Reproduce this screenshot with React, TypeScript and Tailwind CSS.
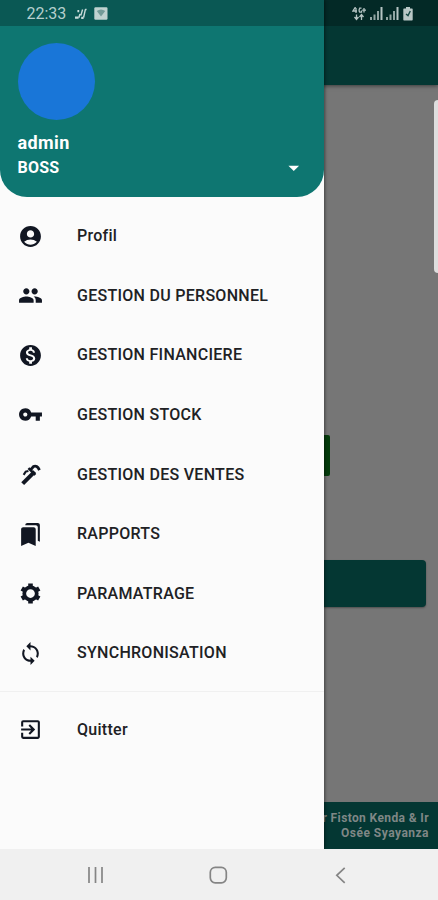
import type { IconType } from 'react-icons';
import {
  MdAccountCircle,
  MdArrowDropDown,
  MdBookmarks,
  MdExitToApp,
  MdGroup,
  MdLoop,
  MdMonetizationOn,
  MdVpnKey,
} from 'react-icons/md';

type IconProps = { size?: number; color?: string };

function Wrench({ size, color }: IconProps) {
  return (
    <svg width={size} height={size} viewBox="0 0 24 24" fill="none" stroke={color}>
      <path d="M4.5 20.8L16 9.3" strokeWidth="3.9" />
      <path d="M10 5.8l6.6 6.6" strokeWidth="2.4" />
      <path d="M5.4 12.4l2-3.2 2.6-.6" strokeWidth="2" />
      <path d="M12.2 7.4l2.6-3q3.4-1.8 5.8 3.4" strokeWidth="2.7" />
    </svg>
  );
}

function Gear({ size, color }: IconProps) {
  return (
    <svg width={size} height={size} viewBox="0 0 24 24" fill="none" stroke={color}>
      <circle cx="12" cy="12" r="6" strokeWidth="3.6" />
      <path
        d="M12 2.3v3.5M12 18.2v3.5M3.6 7.15l3.03 1.75M17.37 15.1l3.03 1.75M3.6 16.85l3.03-1.75M17.37 8.9l3.03-1.75"
        strokeWidth="4.4"
      />
    </svg>
  );
}

const menuItems: { label: string; icon: IconType | typeof Wrench }[] = [
  { label: 'Profil', icon: MdAccountCircle },
  { label: 'GESTION DU PERSONNEL', icon: MdGroup },
  { label: 'GESTION FINANCIERE', icon: MdMonetizationOn },
  { label: 'GESTION STOCK', icon: MdVpnKey },
  { label: 'GESTION DES VENTES', icon: Wrench },
  { label: 'RAPPORTS', icon: MdBookmarks },
  { label: 'PARAMATRAGE', icon: Gear },
  { label: 'SYNCHRONISATION', icon: MdLoop },
];

function MenuItem({ label, icon: Icon }: { label: string; icon: IconType | typeof Wrench }) {
  return (
    <li className="flex h-[59.6px] items-center pl-[17.5px]">
      <Icon size={25} color="#111622" />
      <span className="ml-[34.5px] text-[16px] font-medium tracking-[0.28px] whitespace-nowrap text-[#202124]">{label}</span>
    </li>
  );
}

function Signal() {
  return (
    <svg width="13" height="13" viewBox="0 0 13 13" fill="#b5c4c3">
      <rect x="0" y="10" width="2" height="3" opacity=".8" />
      <rect x="3.5" y="7.5" width="2" height="5.5" opacity=".8" />
      <rect x="7" y="4" width="2" height="9" opacity=".8" />
      <rect x="10.5" y="0" width="2" height="13" />
    </svg>
  );
}

function StatusBar() {
  return (
    <header className="absolute inset-x-0 top-0 z-20 flex h-[26px] items-center bg-black/25 pt-px">
      <span className="ml-[26.5px] w-[40px] text-[16px] whitespace-nowrap text-[#b5cfcd]">22:33</span>
      <svg className="ml-[7.5px]" width="13" height="12" viewBox="0 0 13 12" fill="none" stroke="#c7dbda" strokeWidth="1.4">
        <path d="M4.8 9.8L6 6M9.6 9.5L11.4 1.4M6.8 7.5l1.8-6M11.2 1.5h1.4" />
        <path d="M3.4 3.2h1.8M1 9.6h3.6M7.2 9.8h2.4" strokeWidth="2.3" />
      </svg>
      <svg className="ml-[7px]" width="14" height="13" viewBox="0 0 14 13">
        <rect x=".3" y=".3" width="13.2" height="12.5" rx="1.2" fill="#bfd2d0" />
        <path d="M2.8 4q4.2-3 8.4 0L7 9.5z" fill="#739b98" />
      </svg>
      <div className="mr-[25.5px] ml-auto flex items-center gap-[3.5px]">
        <svg width="14" height="14" viewBox="0 0 14 14" fill="none" stroke="#b5c4c3" strokeWidth="1.3">
          <path d="M3.5 0L1 4h4M4 1v5M9.5 1.2H7.7Q6.5 3.5 7.7 5.2h1.8V3.5M12 1v4.5M10.2 3.2H14" />
          <path d="M4.5 7.5v5M2.5 10l2 2.5 2-2.5M9.5 13V8M7.5 10l2-2.5 2 2.5" />
        </svg>
        <Signal />
        <Signal />
        <svg width="10" height="14" viewBox="0 0 10 14">
          <path d="M3 0h4v1.5h2q.7 0 .7.7v10.6q0 .7-.7.7H1q-.7 0-.7-.7V2.2q0-.7.7-.7h2z" fill="#b9c8c6" />
          <path d="M7.3 4L5 8.6 3 7" fill="none" stroke="#174945" strokeWidth="1.4" />
        </svg>
      </div>
    </header>
  );
}

/* page behind the drawer, already darkened by the scrim */
function Page() {
  return (
    <main className="flex h-[849px] flex-col bg-[#767676]">
      <div className="h-[85px] shrink-0 bg-[#043733] shadow-[0_1px_4px_rgba(0,0,0,0.5)]" />
      <div className="mt-[15px] ml-auto h-[173px] w-[4px] rounded-l-[4px] bg-[#dedede]" />
      <div className="mt-[162px] h-[41px] w-[329.5px] rounded-r-[2px] bg-[#043b0b]" />
      <div className="mt-[84px] mr-[12.5px] ml-[12px] h-[47px] rounded-[4px] bg-[#043733] shadow-[0_1px_2px_rgba(0,0,0,0.35)]" />
      <footer className="mt-auto h-[47px] bg-[#043733] pt-[9px] pr-[9px] text-right text-[12px] leading-[15px] font-bold text-[#7f8786]">
        <p className="tracking-[0.38px]">Ir Fiston Kenda &amp; Ir</p>
        <p className="tracking-[0.48px]">Osée Syayanza</p>
      </footer>
    </main>
  );
}

function Drawer() {
  return (
    <aside className="absolute top-0 left-0 z-10 h-[849px] w-[324px] bg-[#fbfbfb] shadow-[1px_0_3px_rgba(0,0,0,0.45)]">
      <div className="h-[197px] rounded-b-[27px] bg-[#0e7671] px-[17.5px] pt-[43px] text-white">
        <div className="size-[77px] rounded-full bg-[#1976d8]" />
        <p className="mt-[10px] text-[18px] leading-[25px] font-bold tracking-[0.4px]">admin</p>
        <div className="flex h-[25px] items-center justify-between">
          <p className="text-[16px] font-bold tracking-[0.2px]">BOSS</p>
          <MdArrowDropDown size={25.5} />
        </div>
      </div>
      <ul className="mt-[9.4px]">
        {menuItems.map((item) => (
          <MenuItem key={item.label} {...item} />
        ))}
      </ul>
      <hr className="mt-[7.8px] mb-[8px] border-[#f0f0f0]" />
      <ul>
        <MenuItem label="Quitter" icon={MdExitToApp} />
      </ul>
    </aside>
  );
}

function NavigationBar() {
  return (
    <nav className="relative z-10 flex h-[51px] items-center justify-between bg-[#f0f0f0] px-[85px] text-[#858585]">
      <svg width="20" height="20" viewBox="0 0 20 20" fill="none" stroke="currentColor" strokeWidth="1.7">
        <path d="M4 2v16M10.5 2v16M17 2v16" />
      </svg>
      <svg width="20" height="20" viewBox="0 0 20 20" fill="none" stroke="currentColor" strokeWidth="1.7">
        <rect x="1.3" y="2.3" width="16" height="15.5" rx="5" />
      </svg>
      <svg width="20" height="20" viewBox="0 0 20 20" fill="none" stroke="currentColor" strokeWidth="1.7">
        <path d="M11.7 2.8L3.8 10.3l7.9 7.5" />
      </svg>
    </nav>
  );
}

export default function App() {
  return (
    <div className="relative h-[900px] w-[438px] overflow-hidden font-[Roboto,sans-serif]">
      <StatusBar />
      <Page />
      <Drawer />
      <NavigationBar />
    </div>
  );
}
